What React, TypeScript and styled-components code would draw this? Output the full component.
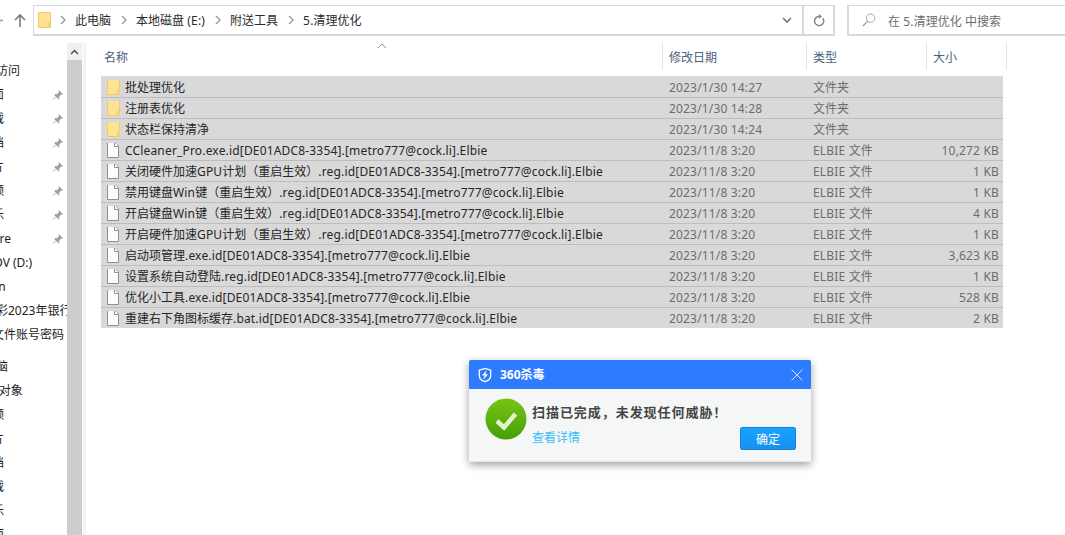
import React from "react";
import styled, { createGlobalStyle } from "styled-components";

const Global = createGlobalStyle`
  html, body { margin: 0; padding: 0; background: #fff; }
  body { font-family: "Noto Sans", "Noto Sans CJK SC", sans-serif; font-size: 12px; }
  * { box-sizing: border-box; }
`;

const Page = styled.div`
  width: 1065px; height: 535px; overflow: hidden; position: relative;
  display: flex; flex-direction: column; background: #fff;
`;
const TopBar = styled.div`
  height: 43px; flex: none; display: flex; align-items: flex-start; padding-top: 5px;
`;
const NavArrows = styled.div`
  width: 33px; height: 30px; flex: none; display: flex; align-items: center; overflow: hidden;
`;
const AddressBox = styled.div`
  width: 802px; height: 31px; flex: none; border: 2px solid #d9d9d9; border-left-width: 1px;
  border-top-width: 1px; border-bottom-width: 2px; display: flex; align-items: center; color: #2b2b2b;
`;
const Crumbs = styled.div`
  flex: 1; display: flex; align-items: center; padding-left: 4px; height: 100%;
`;
const Crumb = styled.span`
  margin: 1px 9.5px 0; white-space: nowrap; line-height: 16px;
`;
const FolderSlot = styled.span`
  display: flex; margin-right: 8.5px;
`;
const Latin = styled.span`
  letter-spacing: 0.17px;
`;
const AddressBtn = styled.div<{ $w: number; $line?: boolean }>`
  width: ${(p) => p.$w}px; height: 100%; display: flex; align-items: center; justify-content: center;
  border-left: ${(p) => (p.$line ? "2px solid #d9d9d9" : "none")};
`;
const SearchBox = styled.div`
  margin-left: 12px; width: 230px; height: 31px; border: 2px solid #d9d9d9; border-right: none;
  border-top-width: 1px; display: flex; align-items: center; padding-left: 13px; color: #6d6d6d;
`;
const SearchText = styled.span`
  margin: 1px 0 0 12px; white-space: nowrap;
`;
const Body = styled.div`
  flex: 1; display: flex; min-height: 0;
`;
const Sidebar = styled.div`
  width: 67px; flex: none; overflow: hidden; padding-top: 16px; color: #1c1c1c;
`;
const SideRow = styled.div<{ $gapTop?: number }>`
  height: 24px; display: flex; align-items: center; position: relative; white-space: nowrap;
  margin-top: ${(p) => p.$gapTop ?? 0}px;
`;
const SideText = styled.span<{ $shift: number }>`
  margin-left: ${(p) => p.$shift}px; line-height: 16px;
`;
const PinWrap = styled.span`
  position: absolute; left: 52px; top: 6px; width: 12px; height: 12px; display: flex;
`;
const Scrollbar = styled.div`
  width: 15px; flex: none; background: #cdcdcd; display: flex; flex-direction: column;
`;
const ScrollUp = styled.div`
  height: 17px; background: #f0f0f0; display: flex; align-items: center; justify-content: center;
`;
const PaneEdge = styled.div`
  width: 3px; flex: none; margin-left: 1px; background: #f4f4f4;
`;
const Content = styled.div`
  flex: 1; min-width: 0; padding-left: 15px; position: relative;
`;
const HeaderRow = styled.div`
  height: 27px; display: flex; color: #4c607a; margin-left: 0;
`;
const HeadCell = styled.div<{ $w: number; $pad?: number; $end?: boolean }>`
  width: ${(p) => p.$w}px; flex: none; padding: 2px 0 0 ${(p) => p.$pad ?? 6}px; display: flex; align-items: center;
  border-right: ${(p) => (p.$end ? "none" : "1px solid #e5e5e5")}; line-height: 16px;
`;
const SortMark = styled.span`
  position: absolute; left: 291px; top: 0; display: flex;
`;
const FileList = styled.div`
  margin-top: 6px; padding-top: 1px; width: 902px; background: #d9d9d9;
`;
const FileRow = styled.div`
  height: 21px; display: grid; grid-template-columns: 562px 144px 120px 76px;
  align-items: center; border-bottom: 1px solid #bdbdbd; line-height: 16px; padding-top: 1px;
  &:last-child { border-bottom: none; height: 20px; }
`;
const NameCell = styled.div`
  display: flex; align-items: center; padding-left: 6px; color: #262626; white-space: nowrap; overflow: hidden;
`;
const IconBox = styled.span`
  width: 13px; height: 16px; flex: none; margin-right: 5px; margin-top: -1px; display: flex; align-items: center;
`;
const NameText = styled.span`
  white-space: nowrap;
`;
const DateCell = styled.div`
  padding-left: 6px; color: #6d6d6d; white-space: nowrap;
`;
const TypeCell = styled(DateCell)``;
const SizeCell = styled.div`
  text-align: right; padding-right: 4px; color: #6d6d6d; white-space: nowrap;
`;

const Dialog = styled.div`
  position: absolute; left: 469px; top: 360px; width: 342px; height: 102px; border-radius: 2px;
  background: #f5f7f7; box-shadow: 0 3px 8px rgba(0, 0, 0, 0.38); overflow: hidden;
  display: flex; flex-direction: column;
`;
const DialogHead = styled.div`
  height: 29px; flex: none; background: #2d7bff; display: flex; align-items: center; padding: 0 8px 0 9px; color: #fff;
`;
const DialogTitle = styled.span`
  margin-left: 8px; font-weight: 700; font-size: 12px; flex: 1; line-height: 16px;
`;
const DialogBody = styled.div`
  flex: 1; display: flex; padding: 9px 15px 0 16px; position: relative;
  border-bottom: 1px solid #e6e6e6;
`;
const CheckIcon = styled.span`
  width: 42px; height: 42px; flex: none; display: flex;
`;
const DialogMain = styled.div`
  margin-left: 5px; flex: 1; display: flex; flex-direction: column;
`;
const DialogMsg = styled.div`
  color: #444; font-weight: 700; font-size: 13px; letter-spacing: 0.95px; line-height: 18px; margin-top: 5px; white-space: nowrap;
`;
const DialogFoot = styled.div`
  display: flex; justify-content: space-between; align-items: flex-start; margin-top: 6px;
`;
const DetailLink = styled.span`
  color: #35bdfb; font-size: 12px; line-height: 16px; margin-top: 3px;
`;
const OkButton = styled.div`
  width: 56px; height: 23px; border-radius: 2px; background: linear-gradient(#16a3ff, #1890ee);
  border: 1px solid #1583d8; color: #fff; display: flex; align-items: center; justify-content: center; font-size: 12px;
`;

const Mixed = ({ text }: { text: string }) => (
  <>
    {text.split(/([\u0000-\u00ff]+)/).map((part, i) =>
      i % 2 === 1 ? <Latin key={i}>{part}</Latin> : part
    )}
  </>
);

const Folder = () => (
  <svg width="13" height="16" viewBox="0 0 13 16">
    <path d="M0.5 0.500h11.500a.5.5 0 0 1 .5.5v14.500h-12z" fill="#ffe392" stroke="#eecb6a" />
    <path d="M9.500 15V10.500h3V15z" fill="#f5d36f" />
  </svg>
);
const FileIcon = () => (
  <svg width="12" height="16" viewBox="0 0 12 16">
    <path d="M0.5 0.500h7.500l3.500 3.500v11.500h-11z" fill="#fbfbfb" stroke="#8f8f8f" />
    <path d="M7.500 0.500v4h4" fill="#fff" stroke="#8f8f8f" />
  </svg>
);
const Pin = () => (
  <svg width="12" height="12" viewBox="0 0 12 12">
    <path d="M6.800 1l4.200 4.200-1.200.6-.6-.2-2 2 .2 1.800-1 .9L2.200 6.100l.9-1 1.800.2 2-2-.2-.6zM3.800 8.200L1 11l-.4-.4 2.800-2.800z" fill="#9aa0a6" />
  </svg>
);
const Sep = () => (
  <svg width="6" height="10" viewBox="0 0 6 10">
    <path d="M1 1l4 4-4 4" fill="none" stroke="#9a9a9a" strokeWidth="1.4" />
  </svg>
);

const files: [string, string, string, string, boolean][] = [
  ["批处理优化", "2023/1/30 14:27", "文件夹", "", true],
  ["注册表优化", "2023/1/30 14:28", "文件夹", "", true],
  ["状态栏保持清净", "2023/1/30 14:24", "文件夹", "", true],
  ["CCleaner_Pro.exe.id[DE01ADC8-3354].[metro777@cock.li].Elbie", "2023/11/8 3:20", "ELBIE 文件", "10,272 KB", false],
  ["关闭硬件加速GPU计划（重启生效）.reg.id[DE01ADC8-3354].[metro777@cock.li].Elbie", "2023/11/8 3:20", "ELBIE 文件", "1 KB", false],
  ["禁用键盘Win键（重启生效）.reg.id[DE01ADC8-3354].[metro777@cock.li].Elbie", "2023/11/8 3:20", "ELBIE 文件", "1 KB", false],
  ["开启键盘Win键（重启生效）.reg.id[DE01ADC8-3354].[metro777@cock.li].Elbie", "2023/11/8 3:20", "ELBIE 文件", "4 KB", false],
  ["开启硬件加速GPU计划（重启生效）.reg.id[DE01ADC8-3354].[metro777@cock.li].Elbie", "2023/11/8 3:20", "ELBIE 文件", "1 KB", false],
  ["启动项管理.exe.id[DE01ADC8-3354].[metro777@cock.li].Elbie", "2023/11/8 3:20", "ELBIE 文件", "3,623 KB", false],
  ["设置系统自动登陆.reg.id[DE01ADC8-3354].[metro777@cock.li].Elbie", "2023/11/8 3:20", "ELBIE 文件", "1 KB", false],
  ["优化小工具.exe.id[DE01ADC8-3354].[metro777@cock.li].Elbie", "2023/11/8 3:20", "ELBIE 文件", "528 KB", false],
  ["重建右下角图标缓存.bat.id[DE01ADC8-3354].[metro777@cock.li].Elbie", "2023/11/8 3:20", "ELBIE 文件", "2 KB", false],
];

const side: { t: string; s: number; pin?: boolean; gap?: number }[] = [
  { t: "快速访问", s: -28 },
  { t: "桌面", s: -20, pin: true },
  { t: "下载", s: -20, pin: true },
  { t: "文档", s: -20, pin: true },
  { t: "图片", s: -20, pin: true },
  { t: "视频", s: -20, pin: true },
  { t: "音乐", s: -20, pin: true },
  { t: "Software", s: -39, pin: true },
  { t: "DV (D:)", s: -6 },
  { t: "Admin", s: -31 },
  { t: "彩2023年银行", s: -4 },
  { t: "文件账号密码", s: -8 },
  { t: "此电脑", s: -28, gap: 8 },
  { t: "3D 对象", s: -20 },
  { t: "视频", s: -20 },
  { t: "图片", s: -20 },
  { t: "文档", s: -20 },
  { t: "下载", s: -20 },
  { t: "音乐", s: -20 },
  { t: "桌面", s: -20 },
];

export default function App() {
  return (
    <Page>
      <Global />
      <TopBar>
        <NavArrows>
          <svg width="33" height="30" viewBox="0 0 33 30">
            <path d="M-3 15.500l3-3M-3 15.500l3 3M3 15.500h-6" fill="none" stroke="#9a9a9a" strokeWidth="1.4" />
            <path d="M15 15l5-5 5 5M20 10.500V22" fill="none" stroke="#7b7b7b" strokeWidth="1.6" />
          </svg>
        </NavArrows>
        <AddressBox>
          <Crumbs>
            <FolderSlot><Folder /></FolderSlot>
            <Sep />
            <Crumb>此电脑</Crumb>
            <Sep />
            <Crumb><Mixed text="本地磁盘 (E:)" /></Crumb>
            <Sep />
            <Crumb>附送工具</Crumb>
            <Sep />
            <Crumb><Mixed text="5.清理优化" /></Crumb>
          </Crumbs>
          <AddressBtn $w={30}>
            <svg width="10" height="7" viewBox="0 0 10 7"><path d="M1 1l4 4 4-4" fill="none" stroke="#777" strokeWidth="1.6" /></svg>
          </AddressBtn>
          <AddressBtn $w={31} $line>
            <svg width="12" height="13" viewBox="0 0 12 13"><path d="M9.800 4.200A4.600 4.600 0 1 1 6 2.400H8" fill="none" stroke="#808080" strokeWidth="1.4" /><path d="M5.800 0L9 2.400 5.800 4.800z" fill="#808080" /></svg>
          </AddressBtn>
        </AddressBox>
        <SearchBox>
          <svg width="14" height="14" viewBox="0 0 14 14"><circle cx="8.600" cy="5.200" r="4.200" fill="none" stroke="#a8a8a8" /><path d="M5.600 8.200L1 13" stroke="#b08d6a" strokeWidth="1.2" /></svg>
          <SearchText><Mixed text="在 5.清理优化 中搜索" /></SearchText>
        </SearchBox>
      </TopBar>
      <Body>
        <Sidebar>
          {side.map((r, i) => (
            <SideRow key={i} $gapTop={r.gap}>
              <SideText $shift={r.s}>{r.t}</SideText>
              {r.pin && <PinWrap><Pin /></PinWrap>}
            </SideRow>
          ))}
        </Sidebar>
        <Scrollbar>
          <ScrollUp>
            <svg width="9" height="6" viewBox="0 0 9 6"><path d="M1 5l3.500-3.500L8 5" fill="none" stroke="#505050" strokeWidth="1.5" /></svg>
          </ScrollUp>
        </Scrollbar>
        <PaneEdge />
        <Content>
          <SortMark>
            <svg width="10" height="6" viewBox="0 0 10 6"><path d="M1 5l4-4 4 4" fill="none" stroke="#8a8a8a" /></svg>
          </SortMark>
          <HeaderRow>
            <HeadCell $w={562} $pad={3}>名称</HeadCell>
            <HeadCell $w={144}>修改日期</HeadCell>
            <HeadCell $w={120}>类型</HeadCell>
            <HeadCell $w={80}>大小</HeadCell>
          </HeaderRow>
          <FileList>
            {files.map((f, i) => (
              <FileRow key={i}>
                <NameCell>
                  <IconBox>{f[4] ? <Folder /> : <FileIcon />}</IconBox>
                  <NameText><Mixed text={f[0]} /></NameText>
                </NameCell>
                <DateCell><Mixed text={f[1]} /></DateCell>
                <TypeCell><Mixed text={f[2]} /></TypeCell>
                <SizeCell><Mixed text={f[3]} /></SizeCell>
              </FileRow>
            ))}
          </FileList>
        </Content>
      </Body>
      <Dialog>
        <DialogHead>
          <svg width="14" height="16" viewBox="0 0 16 17">
            <path d="M8 1l6.500 2v6c0 3.500-3 6-6.500 7-3.500-1-6.500-3.500-6.500-7V3z" fill="none" stroke="#fff" strokeWidth="1.5" />
            <path d="M9.800 3L4.500 9.200h3L6 14l5.500-6.500H8.500z" fill="#fff" />
          </svg>
          <DialogTitle>360杀毒</DialogTitle>
          <svg width="12" height="12" viewBox="0 0 12 12"><path d="M.5.5l11 11M11.500.5l-11 11" stroke="#cfe0ff" strokeWidth="1" /></svg>
        </DialogHead>
        <DialogBody>
          <CheckIcon>
            <svg width="42" height="42" viewBox="0 0 42 42">
              <defs>
                <linearGradient id="g" x1="0" y1="0" x2="0" y2="1">
                  <stop offset="0" stopColor="#78c414" />
                  <stop offset="1" stopColor="#459f07" />
                </linearGradient>
              </defs>
              <circle cx="21" cy="21" r="20.500" fill="url(#g)" />
              <path d="M12 23l7 6.500L30.500 16" fill="none" stroke="#e2f3cf" strokeWidth="4.500" />
            </svg>
          </CheckIcon>
          <DialogMain>
            <DialogMsg>扫描已完成，未发现任何威胁！</DialogMsg>
            <DialogFoot>
              <DetailLink>查看详情</DetailLink>
              <OkButton>确定</OkButton>
            </DialogFoot>
          </DialogMain>
        </DialogBody>
      </Dialog>
    </Page>
  );
}
